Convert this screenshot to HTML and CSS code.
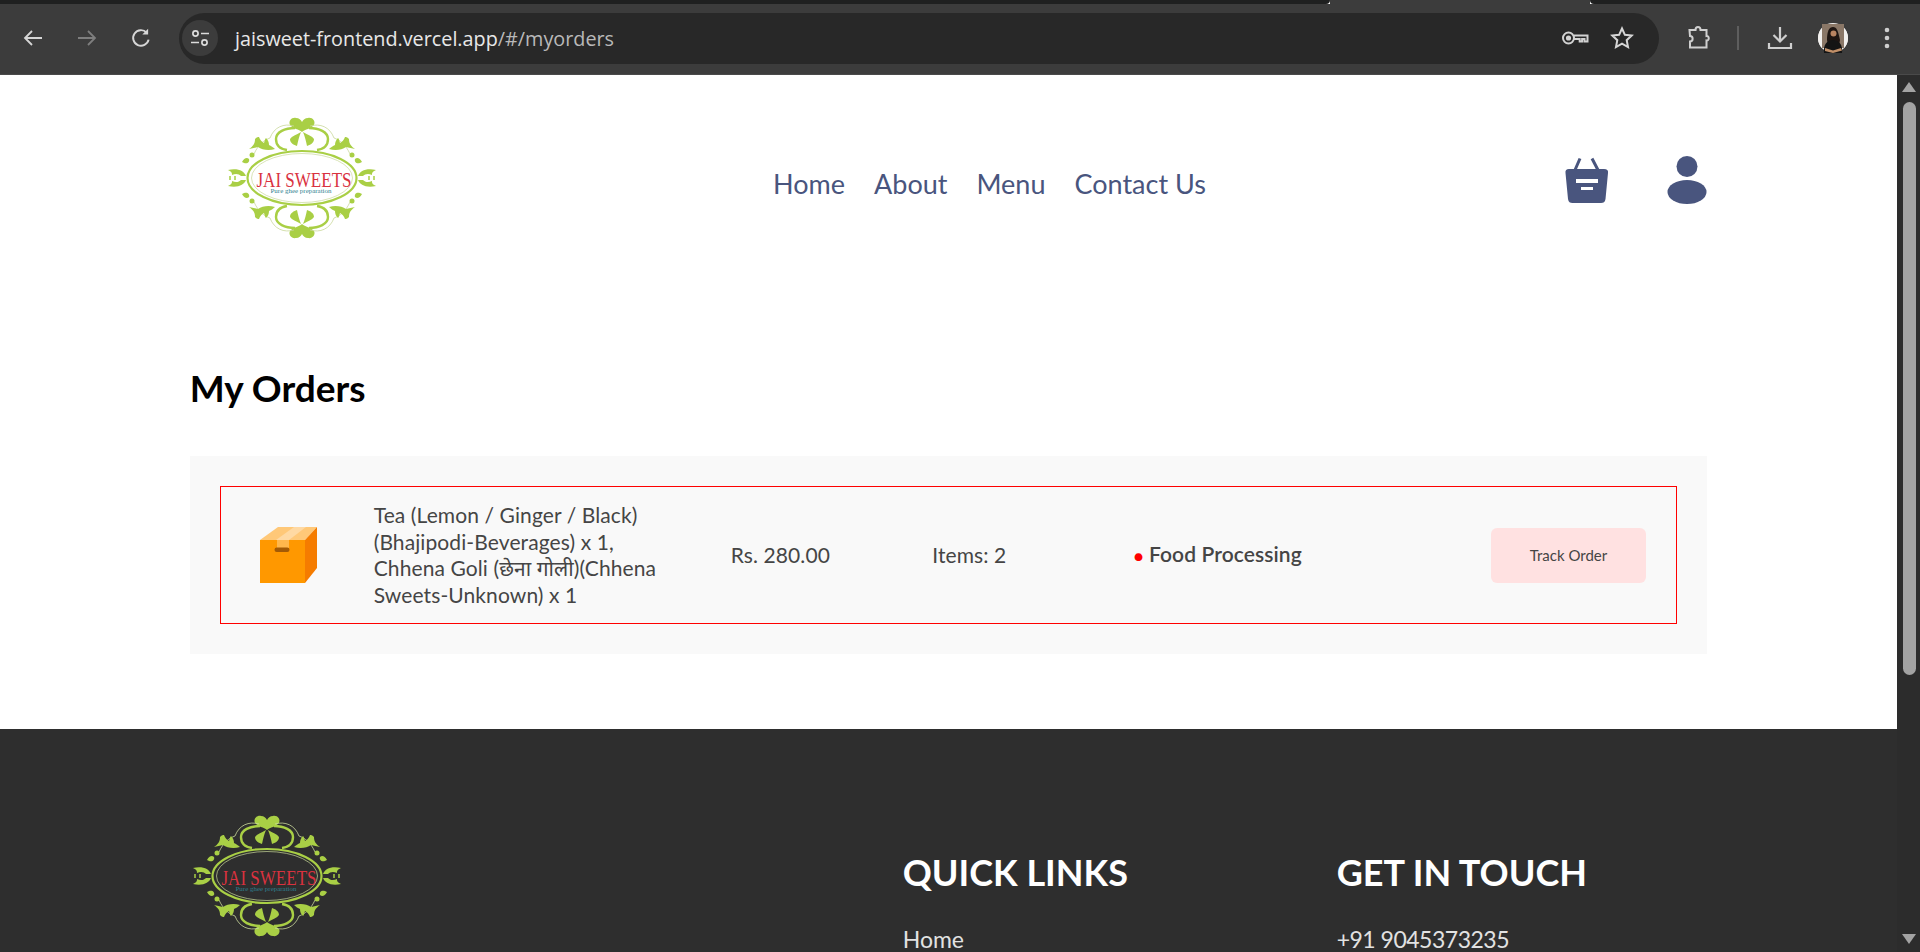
FILE: index.html
```html
<!DOCTYPE html>
<html lang="en">
<head>
  <title>Jai Sweets - My Orders</title>
  <meta charset="UTF-8">
  <meta name="viewport" content="width=device-width, initial-scale=1">
  <link rel="stylesheet" href="styles.css">
</head>
<body>
  <div class="tabstrip">
    <div class="tabstrip-dark"></div>
    <div class="tabstrip-light"></div>
    <div class="tabstrip-dark-end"></div>
  </div>
  <div class="toolbar">
    <button class="tool">
      <svg width="24" height="24" viewBox="0 0 24 24" fill="none" stroke="#d6d6d6" stroke-width="1.8"><path d="M21 12H4M11 5l-7 7 7 7"/></svg>
    </button>
    <button class="tool">
      <svg width="24" height="24" viewBox="0 0 24 24" fill="none" stroke="#7e7e7e" stroke-width="1.8"><path d="M3 12h17M13 5l7 7-7 7"/></svg>
    </button>
    <button class="tool">
      <svg width="26" height="26" viewBox="0 0 24 24" fill="none" stroke="#d6d6d6" stroke-width="1.8"><path d="M19 13.5A7.2 7.2 0 1 1 17.2 7"/><path d="M18.6 3.4v5.4h-5.4z" fill="#d6d6d6" stroke="none"/></svg>
    </button>
    <div class="omnibox">
      <span class="site-chip">
        <svg width="22" height="22" viewBox="0 0 22 22" fill="none" stroke="#dcdcdc" stroke-width="1.7"><circle cx="6.5" cy="6.5" r="2.6"/><path d="M12 6.5h8M2 15.5h8"/><circle cx="15.5" cy="15.5" r="2.6"/></svg>
      </span>
      <span class="url"><span class="url-host">jaisweet-frontend.vercel.app</span>/#/myorders</span>
      <span class="omni-icons">
        <svg width="28" height="20" viewBox="0 0 28 20" fill="none" stroke="#d2d2d2" stroke-width="2"><circle cx="7.5" cy="10" r="5.5"/><circle cx="7.5" cy="10" r="1.6" fill="#d2d2d2"/><path d="M13 7.5h13.5v6h-3v-2.6h-2.4v2.6h-2.4v-2.4H13"/></svg>
        <svg width="26" height="26" viewBox="0 0 26 26" fill="none" stroke="#d6d6d6" stroke-width="2"><path d="M13 3.5l2.9 6.3 6.8.8-5 4.6 1.3 6.8-6-3.4-6 3.4 1.3-6.8-5-4.6 6.8-.8z"/></svg>
      </span>
    </div>
    <div class="tool-right">
      <svg class="puzzle" width="26" height="26" viewBox="0 0 26 26" fill="none" stroke="#cfcfcf" stroke-width="2"><path d="M3.5 5h6c0-4 5-4 5 0h6v6c3-.5 3 5 0 4.400V22.500H4v-6c3.500 0 3.500-5.500 0-5.500z"/></svg>
      <span class="divider"></span>
      <svg class="dl" width="26" height="26" viewBox="0 0 26 26" fill="none" stroke="#cfcfcf" stroke-width="2.200"><path d="M13 2v14M6.500 10l6.500 6.500 6.500-6.500M2 18v5h22v-5"/></svg>
      <svg class="avatar" width="30" height="30" viewBox="0 0 30 30">
        <circle cx="15" cy="15" r="15" fill="#f2f0ee"/>
        <path d="M4 1h22v24H4z" fill="#8a7767"/>
        <path d="M9 17c0-9 2-13 6-13s5 4 7 13l-1 5H10z" fill="#1e1512"/>
        <circle cx="15.500" cy="10.500" r="3" fill="#b98461"/>
        <path d="M6 30c-1-8 3-13 9-13s10 5 9 13z" fill="#141414"/>
        <path d="M7 25l8 2.500 8-2.500 1 2.500-9 2.500-8-2z" fill="#c08f68"/>
        <path d="M0 15a15 15 0 0 0 4 10.200V4.800A15 15 0 0 0 0 15zM30 15a15 15 0 0 1-4 10.200V4.800A15 15 0 0 1 30 15z" fill="#f2f0ee"/>
      </svg>
      <svg class="dots" width="6" height="24" viewBox="0 0 6 24" fill="#cfcfcf"><circle cx="3" cy="4" r="2.300"/><circle cx="3" cy="12" r="2.300"/><circle cx="3" cy="20" r="2.300"/></svg>
    </div>
  </div>

  <div class="viewport">
    <div class="page">
      <header class="navbar">
        <div class="nav-logo">
          <svg class="logo logo-top" width="150" height="124" viewBox="0 0 150 124">
            <defs>
              <g id="logo-quarter">
                <path d="M0-46C-3-49-9-49-12-53C-14-57-10-61-6-60C-3-60-1-58 0-56Z" fill="#a9cf45"/>
                <path d="M-7-50C-17-50-26-46-26-39C-26-33-22-29-15-28" fill="none" stroke="#a9cf45" stroke-width="2.400"/>
                <path d="M-1-46C-3-41-4-37-5-32C-8-33-12-35-12-39C-10-42-6-43-1-46Z" fill="#a9cf45"/>
                <path d="M-48-24C-44-33-38-38-32-40C-28-51-18-55-8-52" fill="none" stroke="#c9d89a" stroke-width=".8"/>
                <path d="M-27-29C-33-27-40-28-44-31L-53-29C-49-32-47-34-47-39C-45-41-44-41-43-41C-42-38-40-36-38-35C-37-38-37-39-36-40C-34-38-33-36-33-33C-31-32-29-31-27-29Z" fill="#a9cf45"/>
                <circle cx="-50" cy="-23" r="2.500" fill="#a9cf45"/>
                <path d="M-60-16C-58-20-55-21-53-19C-52-16-55-13-60-16Z" fill="#a9cf45"/>
                <path d="M-56-2C-58-7-64-10-74-8C-70-6-70-5-70-3C-66-5-63-4-61-2Z" fill="#a9cf45"/>
                <circle cx="-72" cy="1" r="1" fill="#a9cf45"/>
                <circle cx="-67" cy="1" r="1" fill="#a9cf45"/>
              </g>
              <g id="logo-mark">
                <use href="#logo-quarter"/>
                <use href="#logo-quarter" transform="scale(-1,1)"/>
                <use href="#logo-quarter" transform="scale(1,-1)"/>
                <use href="#logo-quarter" transform="scale(-1,-1)"/>
                <ellipse rx="54.500" ry="27" fill="none" stroke="#a9cf45" stroke-width="2.200"/>
                <ellipse rx="50.500" ry="24.500" fill="none" stroke="#c9d89a" stroke-width=".7"/>
                <text class="logo-name" x="2" y="9" text-anchor="middle" textLength="95" lengthAdjust="spacingAndGlyphs">JAI SWEETS</text>
                <text class="logo-sub" x="-1" y="15" text-anchor="middle" textLength="61" lengthAdjust="spacingAndGlyphs">Pure ghee preparation</text>
              </g>
            </defs>
            <use href="#logo-mark" x="75" y="62"/>
          </svg>
        </div>
        <ul class="nav-menu">
          <li>Home</li>
          <li>About</li>
          <li>Menu</li>
          <li>Contact Us</li>
        </ul>
        <div class="nav-icons">
          <svg width="44" height="54" viewBox="0 0 44 54" fill="#49557e">
            <path d="M4 13H39C42 13 43.500 14.500 43 17L40.500 43C40 46 38.500 47 36 47H7.500C5 47 3.500 46 3 43L.5 17C0 14.500 1.500 13 4 13Z"/>
            <path d="M10 14L15 2.500M33 14L27 2.500" stroke="#49557e" stroke-width="3" fill="none"/>
            <path d="M11 23H33V27H11ZM16 31H28V34H16Z" fill="#fff"/>
          </svg>
          <svg width="40" height="54" viewBox="0 0 40 54" fill="#49557e">
            <circle cx="20" cy="10.500" r="10.500"/>
            <ellipse cx="20" cy="36" rx="19.500" ry="12"/>
          </svg>
        </div>
      </header>

      <main class="my-orders">
        <h2>My Orders</h2>
        <section class="orders">
          <div class="order">
            <svg class="parcel" width="78" height="60" viewBox="250 525 78 60">
              <path d="M260 540L278 527H317L305 540Z" fill="#ffc878"/>
              <path d="M276 540L294 527H306L289 540Z" fill="#ffd9a3"/>
              <path d="M260 540H305V583H260Z" fill="#ff9800"/>
              <path d="M305 540L317 527V568L305 583Z" fill="#f57c00"/>
              <path d="M277 540H289V548H277Z" fill="#ffb74d"/>
              <rect x="274.500" y="547.500" width="15" height="4.500" rx="2.200" fill="#a35a05"/>
            </svg>
            <p class="order-items">Tea (Lemon / Ginger / Black) (Bhajipodi-Beverages) x 1, Chhena Goli (छेना गोली)(Chhena Sweets-Unknown) x 1</p>
            <p>Rs. 280.00</p>
            <p>Items: 2</p>
            <p class="order-status"><span class="status-dot">&#x25cf;</span> <b>Food Processing</b></p>
            <button class="track">Track Order</button>
          </div>
        </section>
      </main>

      <footer class="footer">
        <div class="footer-logo">
          <svg class="logo logo-bottom" width="150" height="124" viewBox="0 0 150 124">
            <use href="#logo-mark" x="75" y="62"/>
          </svg>
        </div>
        <div class="footer-col">
          <h3>QUICK LINKS</h3>
          <ul>
            <li>Home</li>
            <li>About</li>
          </ul>
        </div>
        <div class="footer-col">
          <h3>GET IN TOUCH</h3>
          <ul>
            <li class="phone">+91 9045373235</li>
          </ul>
        </div>
      </footer>
    </div>
    <div class="scrollbar">
      <span class="arrow-up"></span>
      <span class="thumb"></span>
      <span class="arrow-down"></span>
    </div>
  </div>
</body>
</html>
```

FILE: styles.css
```css
* {
  box-sizing: border-box;
}
html, body {
  height: 100%;
  margin: 0;
  overflow: hidden;
}
body {
  display: flex;
  flex-direction: column;
  font-family: "Lato", "Noto Sans", "Noto Sans CJK SC", sans-serif;
  color: #454545;
}
p, ul, h2, h3 {
  margin: 0;
  padding: 0;
}
ul {
  list-style: none;
}

/* browser chrome */
.tabstrip {
  display: flex;
  height: 4px;
  flex: none;
}
.tabstrip-dark {
  width: 1330px;
  background-color: #1f2020;
  border-radius: 0 0 10px 0;
}
.tabstrip-light {
  width: 260px;
  background-color: #3c3c3c;
}
.tabstrip-dark-end {
  flex: 1;
  background-color: #1f2020;
  border-radius: 0 0 0 10px;
}
.toolbar {
  display: flex;
  align-items: center;
  height: 71px;
  flex: none;
  padding: 0 0 2px 6px;
  background-color: #3c3c3c;
  border-bottom: 1px solid #4a4a4a;
}
.tool {
  display: flex;
  align-items: center;
  justify-content: center;
  width: 54px;
  height: 40px;
  padding: 0;
  border: 0;
  background: none;
}
.omnibox {
  display: flex;
  align-items: center;
  width: 1480px;
  height: 51px;
  margin-left: 11px;
  padding: 0 24px 0 3px;
  background-color: #282828;
  border-radius: 26px;
}
.site-chip {
  display: flex;
  align-items: center;
  justify-content: center;
  width: 36px;
  height: 36px;
  border-radius: 50%;
  background-color: #3c3c3c;
}
.url {
  flex: 1;
  margin-left: 17px;
  font-family: "Open Sans", sans-serif;
  font-size: 19.800px;
  color: #b9b9b9;
}
.url-host {
  color: #e8e8e8;
}
.omni-icons {
  display: flex;
  align-items: center;
  gap: 20px;
}
.tool-right {
  display: flex;
  align-items: center;
  flex: 1;
  padding-left: 27px;
}
.divider {
  width: 2px;
  height: 24px;
  margin-left: 25px;
  background-color: #5e5e5e;
}
.dl {
  margin-left: 28px;
}
.avatar {
  margin-left: 25px;
}
.dots {
  margin-left: 36px;
}

/* page */
.viewport {
  display: flex;
  flex: 1;
  min-height: 0;
}
.page {
  flex: 1;
  min-width: 0;
  overflow: hidden;
  background-color: #fff;
}
.scrollbar {
  display: flex;
  flex-direction: column;
  align-items: center;
  width: 23px;
  flex: none;
  padding: 7px 0 0 1px;
  background-color: #2c2c2c;
}
.arrow-up, .arrow-down {
  width: 0;
  height: 0;
  border-left: 7.500px solid transparent;
  border-right: 7.500px solid transparent;
}
.arrow-up {
  border-bottom: 10px solid #a3a3a3;
}
.arrow-down {
  margin-top: 259px;
  border-top: 10px solid #a3a3a3;
}
.thumb {
  width: 13px;
  height: 573px;
  margin-top: 10px;
  border-radius: 7px;
  background-color: #a3a3a3;
}

/* navbar */
.navbar {
  display: flex;
  align-items: center;
  justify-content: space-between;
  height: 216px;
  margin: 0 10%;
}
.nav-logo {
  display: flex;
  justify-content: center;
  width: 224px;
  margin-top: -10px;
}
.logo-name {
  font-family: "Liberation Serif", serif;
  font-size: 22px;
  fill: #d9323f;
}
.logo-sub {
  font-family: "Liberation Serif", serif;
  font-size: 7px;
  fill: #2f7f8f;
}
.nav-menu {
  display: flex;
  gap: 29px;
  padding-top: 1px;
  font-size: 27px;
  color: #49557e;
}
.nav-icons {
  display: flex;
  align-items: center;
  gap: 58px;
}

/* orders */
.my-orders {
  margin: 0 10%;
}
.my-orders h2 {
  padding-top: 75px;
  font-size: 37px;
  line-height: 44px;
  font-weight: 700;
  color: #000;
}
.orders {
  margin-top: 46px;
  padding: 30px;
  background-color: #f9f9f9;
}
.order {
  display: grid;
  grid-template-columns: 0.5fr 2fr 1fr 1fr 2fr 1fr;
  gap: 46px;
  align-items: center;
  padding: 15px 30px 15px 29px;
  border: 1px solid #f00;
  font-size: 21px;
  line-height: 26.500px;
  letter-spacing: 0.1px;
}
.parcel {
  display: block;
}
.status-dot {
  color: #f00;
  font-size: 16px;
}
.order-status b {
  font-weight: 600;
}
.track {
  height: 55px;
  padding: 0;
  border: 0;
  border-radius: 6px;
  background-color: #ffe1e1;
  font-family: inherit;
  font-size: 15px;
  color: #454545;
}

/* footer */
.footer {
  display: grid;
  grid-template-columns: 633px 354px 1fr;
  gap: 80px;
  margin-top: 75px;
  padding: 85px 10% 0;
  height: 300px;
  background-color: #2e2e2e;
  color: #e2e2e2;
}
.footer-logo {
  padding-left: 2px;
}
.footer-col {
  padding-top: 36px;
}
.footer-col h3 {
  font-size: 36px;
  line-height: 44px;
  font-weight: 700;
  color: #fff;
}
.footer-col ul {
  margin-top: 31px;
  font-size: 23px;
  line-height: 28px;
}
.phone {
  letter-spacing: -0.5px;
}
```
